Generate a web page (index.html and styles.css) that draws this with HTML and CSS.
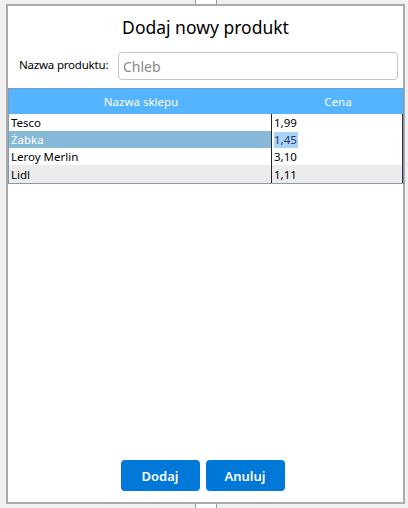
FILE: index.html
```html
<!DOCTYPE html>
<html lang="pl">
<head>
<meta charset="utf-8">
<link rel="stylesheet" href="styles.css">
</head>
<body>
<div class="backdrop">
  <div class="bg-col bg-top"></div>
  <div class="bg-col bg-bottom"></div>
</div>
<div class="dialog">
  <h1 class="title">Dodaj nowy produkt</h1>
  <div class="form-row">
    <label class="label" for="name">Nazwa produktu:</label>
    <input class="input" id="name" type="text" placeholder="Chleb">
  </div>
  <div class="grid">
    <div class="grid-head">
      <div class="cell-h col-name">Nazwa sklepu</div>
      <div class="cell-h col-price">Cena</div>
    </div>
    <div class="grid-row">
      <div class="cell col-name">Tesco</div>
      <div class="cell col-price">1,99</div>
    </div>
    <div class="grid-row selected">
      <div class="cell col-name">Żabka</div>
      <div class="cell col-price"><span class="hl">1,45</span></div>
    </div>
    <div class="grid-row">
      <div class="cell col-name">Leroy Merlin</div>
      <div class="cell col-price">3,10</div>
    </div>
    <div class="grid-row alt">
      <div class="cell col-name">Lidl</div>
      <div class="cell col-price">1,11</div>
    </div>
  </div>
  <div class="spacer"></div>
  <div class="buttons">
    <button class="btn">Dodaj</button>
    <button class="btn">Anuluj</button>
  </div>
</div>
</body>
</html>
```
FILE: styles.css
```css
html, body {
  margin: 0;
  padding: 0;
}
body {
  width: 408px;
  height: 508px;
  background: #f0f0f0;
  font-family: "Noto Sans", "Open Sans", sans-serif;
  position: relative;
  overflow: hidden;
}
.backdrop {
  position: absolute;
  inset: 0;
  z-index: 0;
}
.bg-col {
  position: absolute;
  left: 195px;
  width: 20px;
  background: #ffffff;
  border-left: 1px solid #7d9cc0;
  border-right: 1px solid #7d9cc0;
}
.bg-top { top: 0; height: 4px; }
.bg-bottom { bottom: 0; height: 4px; }

.dialog {
  position: relative;
  z-index: 1;
  box-sizing: border-box;
  margin: 4px 0 0 6px;
  width: 399px;
  height: 500px;
  border: 2px solid #ababab;
  background: #ffffff;
  display: flex;
  flex-direction: column;
}
.title {
  margin: 0;
  padding-top: 8px;
  height: 32px;
  font-weight: normal;
  font-size: 17.5px;
  line-height: 26px;
  text-align: center;
  color: #000;
}
.form-row {
  display: flex;
  align-items: center;
  padding: 6px 0 0 11px;
  gap: 9px;
  height: 28px;
}
.label {
  font-size: 11.5px;
  color: #000;
  width: 90px;
  white-space: nowrap;
  letter-spacing: -0.2px;
  position: relative;
  top: -2px;
}
.input {
  box-sizing: border-box;
  width: 280px;
  height: 28px;
  border: 1px solid #c4c4c4;
  border-radius: 4px;
  font-family: inherit;
  font-size: 14px;
  padding: 1px 4px 0 4px;
  color: #000;
  outline: none;
}
.input::placeholder {
  color: #8a8a8a;
}
.grid {
  margin-top: 8px;
  border: 1px solid #7b9cbd;
  width: 396px;
  box-sizing: border-box;
  font-size: 11.5px;
}
.grid-head {
  display: flex;
  height: 25px;
  background: #55b4ff;
  color: #ffffff;
  align-items: center;
}
.cell-h {
  text-align: center;
  font-size: 11.5px;
}
.col-name {
  width: 263px;
  box-sizing: border-box;
  border-right: 1px solid #222;
}
.col-price {
  flex: 1;
  box-sizing: border-box;
  border-right: 1px solid #333;
}
.grid-head .col-name,
.grid-head .col-price {
  border-right: none;
}
.grid-head .col-name { width: 264px; }
.grid-row {
  display: flex;
  height: 17px;
  color: #000;
}
.cell {
  padding-left: 2px;
  padding-top: 1px;
  line-height: 16px;
  white-space: nowrap;
}
.grid-row.alt {
  background: #ececec;
  height: 18px;
}
.grid-row.alt .cell {
  padding-top: 2px;
}
.grid-row.selected .col-name {
  background: #86b9d8;
  color: #ffffff;
}
.hl {
  background: #a9d2f7;
  color: #2a3a55;
  padding: 0 1px 0 0;
  display: inline-block;
  line-height: 16px;
}
.spacer {
  flex: 1;
}
.buttons {
  display: flex;
  justify-content: center;
  gap: 6px;
  padding-bottom: 11px;
  padding-right: 6px;
}
.btn {
  width: 79px;
  height: 31px;
  border: none;
  border-radius: 4px;
  background: #0078d7;
  color: #ffffff;
  font-family: inherit;
  font-size: 13px;
  font-weight: 600;
  padding: 0;
}
```
